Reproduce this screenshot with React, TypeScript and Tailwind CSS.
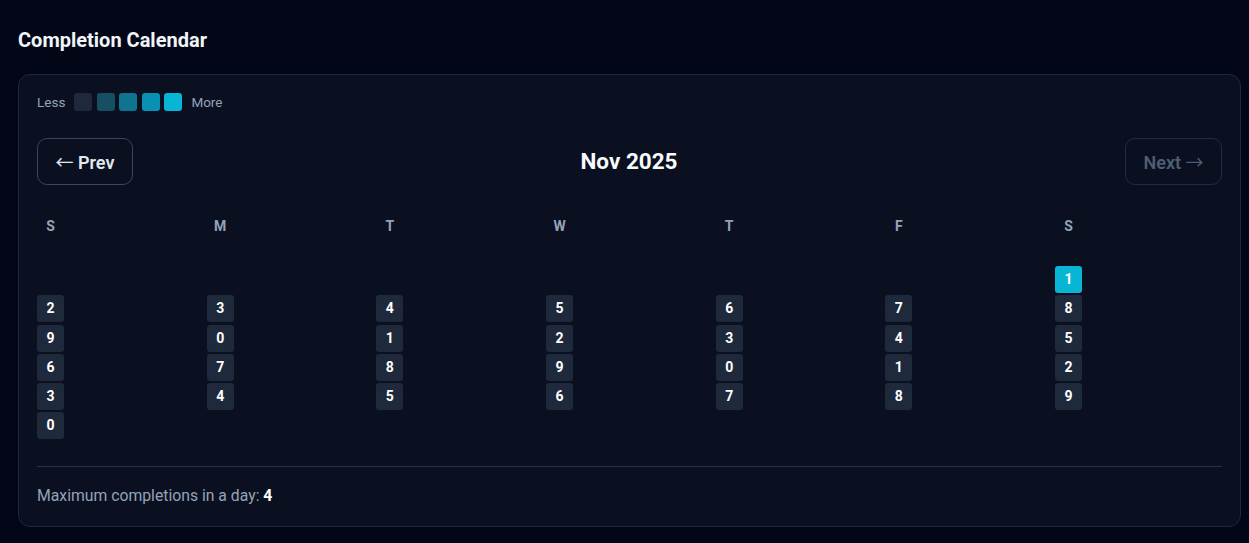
import React from 'react';

const legend = ['bg-[#1e293b]', 'bg-[#164e63]', 'bg-[#0e7490]', 'bg-[#0891b2]', 'bg-[#06b6d4]'];
const weekdays = ['S', 'M', 'T', 'W', 'T', 'F', 'S'];

// November 2025 starts on a Saturday
const days: (number | null)[] = [null, null, null, null, null, null];
for (let d = 1; d <= 30; d++) days.push(d);

export default function App() {
  return (
    <div className="min-h-screen bg-[#030617] text-white font-['Roboto',sans-serif] pt-[26px] pl-[18px]">
      <h2 className="text-[20px] leading-[28px] font-bold text-[#f1f5f9] mb-[20px]">Completion Calendar</h2>

      <div className="w-[1223px] rounded-xl border border-[#1e293b] bg-[#0a1020] px-[18px] pt-[18px] pb-[20px]">
        {/* Legend */}
        <div className="flex items-center gap-[4.5px] h-[18px] text-[13.5px] text-[#94a3b8]">
          <span className="mr-[4.5px]">Less</span>
          {legend.map((c, i) => (
            <span key={i} className={`w-[18px] h-[18px] rounded-[3px] ${c}`} />
          ))}
          <span className="ml-[4.5px]">More</span>
        </div>

        {/* Month navigation */}
        <div className="flex items-center justify-between mt-[27px] mb-[33px]">
          <button className="h-[47px] w-[96px] rounded-[10px] border border-[#3b4658] text-[18px] font-semibold text-[#e2e8f0]">
            <span className="font-['Noto_Sans_CJK_SC',sans-serif] font-normal">←</span> Prev
          </button>
          <div className="text-[22.5px] font-bold text-[#f8fafc]">Nov 2025</div>
          <button disabled className="h-[47px] w-[97px] rounded-[10px] border border-[#222c3c] text-[18px] font-semibold text-[#4f5d72]">
            Next <span className="font-['Noto_Sans_CJK_SC',sans-serif] font-normal">→</span>
          </button>
        </div>

        {/* Weekday headers */}
        <div className="grid grid-cols-7 gap-x-[2.7px] h-4">
          {weekdays.map((w, i) => (
            <div key={i} className="w-[27px] text-center text-[14px] leading-4 font-bold text-[#94a3b8]">{w}</div>
          ))}
        </div>

        {/* Days */}
        <div className="grid grid-cols-7 gap-x-[2.7px] gap-y-[2.3px] mt-[32px]">
          {days.map((d, i) => (
            <div key={i} className="h-[27px]">
              {d !== null && (
                <div
                  className={`w-[27px] h-[27px] rounded-[3px] flex items-center justify-center text-[14px] font-bold text-white ${
                    d === 1 ? 'bg-[#06b6d4]' : 'bg-[#1e293b]'
                  }`}
                >
                  {d % 10}
                </div>
              )}
            </div>
          ))}
        </div>

        {/* Footer */}
        <div className="mt-[27px] border-t border-[#273244] pt-[19px] text-[15.75px] leading-5 text-[#94a3b8]">
          Maximum completions in a day: <span className="font-bold text-white">4</span>
        </div>
      </div>
    </div>
  );
}
